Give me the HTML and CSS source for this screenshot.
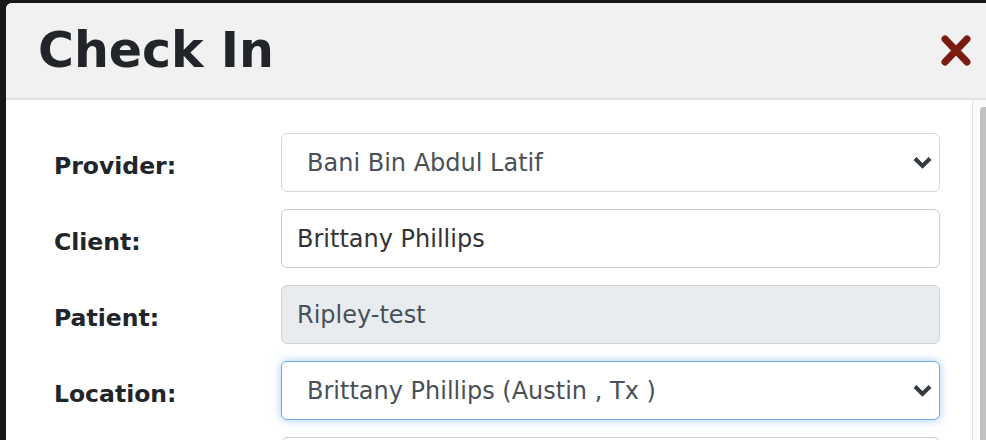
FILE: index.html
```html
<!DOCTYPE html>
<html lang="en">
<head>
  <meta charset="UTF-8">
  <meta name="viewport" content="width=device-width, initial-scale=1.0">
  <title>Check In</title>
  <link rel="stylesheet" href="styles.css">
</head>
<body>
  <div class="modal">
    <div class="modal-header">
      <h1>Check In</h1>
      <button class="close" type="button" aria-label="Close">
        <svg width="32" height="31" viewBox="0 0 32 31">
          <path d="M5 4 L27 27 M27 4 L5 27" stroke="#7b1c12" stroke-width="7" stroke-linecap="round" fill="none"/>
        </svg>
      </button>
    </div>
    <div class="modal-body">
      <form class="checkin-form">
        <label class="label">Provider:</label>
        <div class="select-wrap">
          <select class="field select">
            <option>Bani Bin Abdul Latif</option>
          </select>
          <svg class="chevron" width="19" height="13" viewBox="0 0 19 13">
            <path d="M2 2.5 L9.5 10 L17 2.5" stroke="#343a40" stroke-width="4" fill="none"/>
          </svg>
        </div>

        <label class="label">Client:</label>
        <input class="field input" type="text" value="Brittany Phillips">

        <label class="label">Patient:</label>
        <input class="field input" type="text" value="Ripley-test" disabled>

        <label class="label">Location:</label>
        <div class="select-wrap">
          <select class="field select focused">
            <option>Brittany Phillips (Austin , Tx )</option>
          </select>
          <svg class="chevron" width="19" height="13" viewBox="0 0 19 13">
            <path d="M2 2.5 L9.5 10 L17 2.5" stroke="#343a40" stroke-width="4" fill="none"/>
          </svg>
        </div>

        <span class="label"></span>
        <input class="field input" type="text" value="" aria-label="Notes">
      </form>
      <div class="scrollbar"><div class="thumb"></div></div>
    </div>
  </div>
</body>
</html>
```

FILE: styles.css
```css
html, body {
  height: 100%;
}

body {
  margin: 0;
  background: #181818;
  font-family: "DejaVu Sans", Verdana, sans-serif;
  overflow: hidden;
}

.modal {
  margin: 3px 0 0 6px;
  height: calc(100% - 3px);
  background: #fff;
  border-top-left-radius: 6px;
  display: flex;
  flex-direction: column;
  overflow: hidden;
}

.modal-header {
  height: 95px;
  flex: none;
  display: flex;
  align-items: center;
  justify-content: space-between;
  padding: 0 14px 0 32px;
  background: #f1f1f1;
  border-bottom: 2px solid #dee2e6;
}

.modal-header h1 {
  margin: 0;
  font-size: 49px;
  font-weight: bold;
  color: #212529;
  line-height: 1;
}

.close {
  border: none;
  background: none;
  padding: 0;
  margin: 0;
  display: flex;
  cursor: pointer;
}

.modal-body {
  flex: 1;
  display: flex;
  min-height: 0;
}

.checkin-form {
  flex: 1;
  display: grid;
  grid-template-columns: 227px 1fr;
  row-gap: 17px;
  align-items: center;
  align-content: start;
  padding: 33px 32px 0 48px;
}

.label {
  font-size: 23.5px;
  font-weight: bold;
  color: #212529;
  padding-top: 6px;
}

.field {
  box-sizing: border-box;
  width: 100%;
  height: 59px;
  margin: 0;
  font-family: inherit;
  font-size: 24px;
  border-radius: 6px;
  outline: none;
  background: #fff;
}

.input {
  padding: 0 15px;
  border: 1.5px solid #cbcbcb;
  color: #333;
}

.input:disabled {
  background: #e9ecef;
  border-color: #d0d5da;
  color: #495057;
  -webkit-text-fill-color: #495057;
}

.select-wrap {
  position: relative;
}

.select {
  appearance: none;
  -webkit-appearance: none;
  padding: 0 50px 0 25px;
  border: 1.5px solid #d2d7dd;
  color: #495057;
}

.select.focused {
  border-color: #6faaea;
  box-shadow: 0 0 10px rgba(102, 170, 235, 0.6);
}

.chevron {
  position: absolute;
  right: 8px;
  top: 23px;
  pointer-events: none;
}

.scrollbar {
  width: 13px;
  flex: none;
  border-left: 1px solid #e4e4e4;
  background: #fafafa;
  padding-top: 7px;
  display: flex;
  justify-content: flex-end;
}

.thumb {
  width: 6px;
  height: 100%;
  background: #c1c1c1;
  border-top-left-radius: 4px;
}
```
